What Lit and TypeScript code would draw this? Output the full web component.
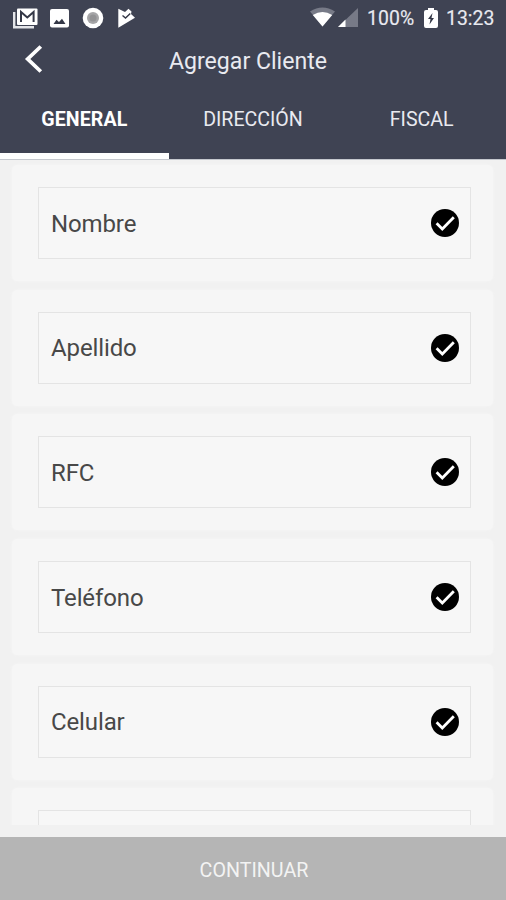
import { LitElement, html, css } from "lit";
import { customElement, state } from "lit/decorators.js";
import { classMap } from "lit/directives/class-map.js";

@customElement("status-bar")
class StatusBar extends LitElement {
  static styles = css`
    :host { display: flex; height: 35px; align-items: center; justify-content: space-between; color: #e9eaf0; }
    svg { display: block; flex: none; }
    .left { display: flex; margin-left: 12px; gap: 11px; }
    .right { display: flex; align-items: center; margin-right: 10px; font-size: 19.4px; -webkit-text-stroke: 0.15px; }
    .signal { margin-left: 3px; }
    .level, .time { line-height: 34px; padding-top: 3px; white-space: nowrap; }
    .level { margin-left: 9px; width: 50px; letter-spacing: 0.1px; }
    .battery { margin: 0 8px 0 7px; }
    .time { width: 50px; }
  `;
  render() {
    return html`
      <div class="left">
        <svg width="26" height="22" viewBox="0 0 26 22">
          <path d="M2.200 5v15.200h19.800" fill="none" stroke="#e4e5e9" stroke-width="2.400"/>
          <rect x="5" y="1.500" width="20.500" height="16.500" rx="1" fill="#fff"/>
          <path d="M9 15V5l6.300 5.500L21.600 5v10" fill="none" stroke="#343847" stroke-width="2"/>
        </svg>
        <svg width="21" height="22" viewBox="0 0 21 22">
          <rect x="1" y="2" width="19" height="18.500" rx="2" fill="#fff"/>
          <path d="M4.500 17l3-4.200 2.500 2.200 3-3.200 3.500 5.200z" fill="#343847"/>
        </svg>
        <svg width="23" height="22" viewBox="0 0 23 22">
          <circle cx="12" cy="11" r="10.300" fill="#fff"/>
          <circle cx="12" cy="11" r="6" fill="#a5a5a7"/>
          <circle cx="12" cy="11" r="3.500" fill="#929294"/>
        </svg>
        <svg width="20" height="22" viewBox="0 0 20 22">
          <path d="M3.300 1.800l6.700 3.200 3.500-3.200 3 2.800-.5 2.500 4 3.600L3.300 20.800z" fill="#fff"/>
          <path d="M7.500 8.500l3 2.600 4.800-4.700" fill="none" stroke="#343847" stroke-width="1.400"/>
        </svg>
      </div>
      <div class="right">
        <svg width="25" height="21" viewBox="0 0 25 21">
          <path d="M0 4.500Q12.500-3.500 25 4.500L12.500 19.500z" fill="#777a87"/>
          <path d="M2.800 8Q12.500 2 22.200 8L12.500 19.500z" fill="#fff"/>
        </svg>
        <svg class="signal" width="20" height="21" viewBox="0 0 20 21">
          <path d="M20 1v19H0z" fill="#777a87"/>
          <path d="M7.500 12.600V20H0z" fill="#fff"/>
        </svg>
        <span class="level">100%</span>
        <svg class="battery" width="14" height="22" viewBox="0 0 14 22">
          <path d="M4 3V1h6v2h2q2 0 2 2v14q0 2-2 2H2q-2 0-2-2V5q0-2 2-2z" fill="#fff"/>
          <path d="M8.500 6L4 12h2.500l-1 5.500L10 11H7.500z" fill="#343847"/>
        </svg>
        <span class="time">13:23</span>
      </div>`;
  }
}

@customElement("form-field")
class FormField extends LitElement {
  static properties = { label: { type: String } };
  declare label: string;
  static styles = css`
    :host { display: block; flex: none; box-sizing: border-box; height: 116px; padding: 22px 22px 22px 26px; background: #f6f6f6; border-radius: 5px; box-shadow: 0 0 3px #f6f6f6; }
    .box { display: flex; align-items: center; justify-content: space-between; box-sizing: border-box; height: 72px; border: 1px solid #e4e4e4; padding: 0 11px 0 12px; background: #f7f7f7; }
    .label { font-size: 24px; line-height: 36px; letter-spacing: -0.12px; padding-top: 1px; color: #484848; }
    svg { display: block; }
  `;
  render() {
    return html`<div class="box">
      <span class="label">${this.label}</span>
      <svg width="28" height="28" viewBox="0 0 28 28">
        <circle cx="14" cy="14" r="14" fill="#000"/>
        <path d="M5.600 14.200l5.700 5.700L22.800 8.300" fill="none" stroke="#fff" stroke-width="2.800"/>
      </svg>
    </div>`;
  }
}

@customElement("app-root")
class AppRoot extends LitElement {
  @state() private active = 0;
  private tabs = ["GENERAL", "DIRECCIÓN", "FISCAL"];
  private fields = ["Nombre", "Apellido", "RFC", "Teléfono", "Celular", ""];

  static styles = css`
    :host { display: flex; flex-direction: column; height: 900px; background: #f1f1f1; font-family: Roboto, "Noto Sans", sans-serif; overflow: hidden; }
    header { flex: none; height: 159px; background: #3f4353; border-bottom: 1px solid #c5c8ce; color: #e9eaf0; display: flex; flex-direction: column; }
    .bar { display: grid; grid-template-columns: 60px 1fr 70px; height: 51px; align-items: center; }
    .back { display: block; margin: -5px 0 0 24px; }
    h1 { margin: 0; font-size: 23.100px; font-weight: 400; text-align: center; line-height: 51px; padding-top: 1px; }
    .tabs { display: grid; grid-template-columns: repeat(3, 1fr); flex: 1; }
    .tab { box-sizing: border-box; padding-top: 19px; border-bottom: 6px solid transparent; text-align: center; font-size: 19.600px; line-height: 30px; }
    .tab.active { font-weight: 700; letter-spacing: 0.1px; color: #fff; border-color: #fff; }
    main { flex: none; box-sizing: border-box; height: 665px; padding: 5px 13px 0 12px; display: flex; flex-direction: column; gap: 8.700px; overflow: hidden; }
    footer { margin-top: auto; box-sizing: border-box; height: 63px; background: #b5b5b5; color: #f3f3f3; text-align: center; font-size: 19.700px; line-height: 67px; padding-left: 2px; }
  `;
  render() {
    return html`
      <header>
        <status-bar></status-bar>
        <div class="bar">
          <svg class="back" width="20" height="30" viewBox="0 0 20 30">
            <path d="M16.800 2.500L3.700 15l13.100 12.500" fill="none" stroke="#fff" stroke-width="3.800"/>
          </svg>
          <h1>Agregar Cliente</h1>
        </div>
        <nav class="tabs">
          ${this.tabs.map((t, i) => html`<div class=${classMap({ tab: true, active: i === this.active })} @click=${() => (this.active = i)}>${t}</div>`)}
        </nav>
      </header>
      <main>${this.fields.map((f) => html`<form-field .label=${f}></form-field>`)}</main>
      <footer>CONTINUAR</footer>`;
  }
}
